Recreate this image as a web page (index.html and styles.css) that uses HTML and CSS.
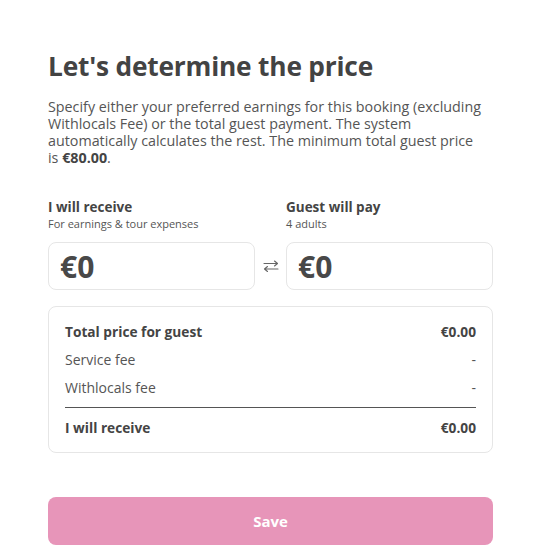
FILE: index.html
```html
<!DOCTYPE html>
<html>
<head>
<meta charset="utf-8">
<link rel="stylesheet" href="styles.css">
</head>
<body>
<div class="page">
  <h1 class="title">Let's determine the price</h1>
  <p class="intro">Specify either your preferred earnings for this booking (excluding Withlocals Fee) or the total guest payment. The system automatically calculates the rest. The minimum total guest price is <b>€80.00</b>.</p>
  <div class="fields">
    <div class="field">
      <div class="label">I will receive</div>
      <div class="sub">For earnings &amp; tour expenses</div>
      <div class="input">€0</div>
    </div>
    <div class="swap">
      <svg width="18" height="14" viewBox="0 0 18 14" fill="none" stroke="#666" stroke-width="1.1" stroke-linecap="round" stroke-linejoin="round">
        <path d="M2 4.5H15.5M12.5 2L15.5 4.5L12.5 7"/>
        <path d="M16 10H2.5M5.5 7.5L2.5 10L5.5 12.5"/>
      </svg>
    </div>
    <div class="field">
      <div class="label">Guest will pay</div>
      <div class="sub">4 adults</div>
      <div class="input">€0</div>
    </div>
  </div>
  <div class="summary">
    <div class="row strong"><span>Total price for guest</span><span>€0.00</span></div>
    <div class="row"><span>Service fee</span><span>-</span></div>
    <div class="row"><span>Withlocals fee</span><span>-</span></div>
    <div class="divider"></div>
    <div class="row strong"><span>I will receive</span><span>€0.00</span></div>
  </div>
  <button class="save">Save</button>
</div>
</body>
</html>
```
FILE: styles.css
```css
* { box-sizing: border-box; }
body {
  margin: 0;
  background: #fff;
  font-family: "Open Sans", "Noto Sans", sans-serif;
  color: #444;
}
.page {
  width: 445px;
  margin-left: 48px;
  padding-top: 48px;
}
.title {
  margin: 0;
  font-size: 26.3px;
  line-height: 36px;
  font-weight: 700;
  color: #434343;
  letter-spacing: -0.2px;
}
.intro {
  margin: 14px 0 0;
  max-width: 436px;
  font-size: 14.3px;
  line-height: 17px;
  color: #555;
}
.intro b { font-weight: 700; color: #444; }
.fields {
  display: flex;
  align-items: flex-end;
  margin-top: 33px;
}
.field { flex: 0 0 207px; }
.label {
  font-size: 13.5px;
  font-weight: 700;
  line-height: 17px;
  color: #444;
}
.sub {
  font-size: 11px;
  line-height: 15px;
  color: #555;
}
.input {
  margin-top: 11px;
  height: 48px;
  border: 1px solid #e6e6e6;
  border-radius: 8px;
  padding: 0 11px;
  display: flex;
  align-items: center;
  font-size: 30px;
  font-weight: 700;
  color: #484848;
}
.swap {
  flex: 1;
  height: 48px;
  display: flex;
  align-items: center;
  justify-content: center;
}
.summary {
  margin-top: 16px;
  border: 1px solid #e6e6e6;
  border-radius: 8px;
  padding: 10px 16px 11px;
}
.row {
  display: flex;
  justify-content: space-between;
  align-items: center;
  height: 28px;
  font-size: 14px;
  color: #555;
}
.row.strong { font-weight: 700; color: #444; font-size: 13.7px; }
.divider {
  height: 1px;
  background: #555;
  margin: 6px 0 5px;
}
.save {
  display: block;
  width: 100%;
  margin-top: 44px;
  height: 48px;
  border: none;
  border-radius: 8px;
  background: #e795b9;
  color: #fff;
  font-family: inherit;
  font-size: 15px;
  font-weight: 700;
}
```
